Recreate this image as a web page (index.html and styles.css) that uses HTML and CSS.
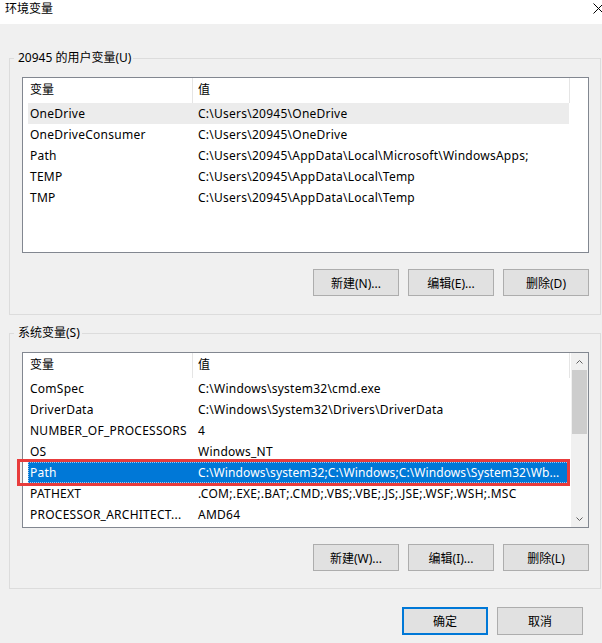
FILE: index.html
```html
<!DOCTYPE html>
<html lang="zh-CN">
<head>
    <meta charset="UTF-8">
    <title>环境变量</title>
    <link rel="stylesheet" href="styles.css">
</head>
<body>
    <div class="window">
        <div class="titlebar">
            <span class="title">环境变量</span>
            <svg class="close-icon" width="11" height="11" viewBox="0 0 11 11">
                <path d="M0.5 0.5 L10.5 10.5 M10.5 0.5 L0.5 10.5" stroke="#000" stroke-width="1" fill="none"/>
            </svg>
        </div>

        <div class="dialog-body">
            <fieldset class="group group-user">
                <legend>20945 的用户变量(U)</legend>
                <div class="listview">
                    <div class="lv-main">
                        <div class="lv-header">
                            <div class="hd-name">变量</div>
                            <div class="hd-value">值</div>
                        </div>
                        <div class="lv-row hover"><div class="cell-name">OneDrive</div><div class="cell-value">C:\Users\20945\OneDrive</div></div>
                        <div class="lv-row"><div class="cell-name">OneDriveConsumer</div><div class="cell-value">C:\Users\20945\OneDrive</div></div>
                        <div class="lv-row"><div class="cell-name">Path</div><div class="cell-value">C:\Users\20945\AppData\Local\Microsoft\WindowsApps;</div></div>
                        <div class="lv-row"><div class="cell-name">TEMP</div><div class="cell-value">C:\Users\20945\AppData\Local\Temp</div></div>
                        <div class="lv-row"><div class="cell-name">TMP</div><div class="cell-value">C:\Users\20945\AppData\Local\Temp</div></div>
                    </div>
                </div>
                <div class="btn-row">
                    <button class="btn">新建(N)...</button>
                    <button class="btn">编辑(E)...</button>
                    <button class="btn">删除(D)</button>
                </div>
            </fieldset>

            <fieldset class="group group-system">
                <legend>系统变量(S)</legend>
                <div class="listview">
                    <div class="lv-main">
                        <div class="lv-header">
                            <div class="hd-name">变量</div>
                            <div class="hd-value">值</div>
                        </div>
                        <div class="lv-row"><div class="cell-name">ComSpec</div><div class="cell-value">C:\Windows\system32\cmd.exe</div></div>
                        <div class="lv-row"><div class="cell-name">DriverData</div><div class="cell-value">C:\Windows\System32\Drivers\DriverData</div></div>
                        <div class="lv-row"><div class="cell-name">NUMBER_OF_PROCESSORS</div><div class="cell-value">4</div></div>
                        <div class="lv-row"><div class="cell-name">OS</div><div class="cell-value">Windows_NT</div></div>
                        <div class="lv-row selected"><div class="cell-name">Path</div><div class="cell-value">C:\Windows\system32;C:\Windows;C:\Windows\System32\Wb...</div></div>
                        <div class="lv-row"><div class="cell-name">PATHEXT</div><div class="cell-value">.COM;.EXE;.BAT;.CMD;.VBS;.VBE;.JS;.JSE;.WSF;.WSH;.MSC</div></div>
                        <div class="lv-row"><div class="cell-name">PROCESSOR_ARCHITECT...</div><div class="cell-value">AMD64</div></div>
                    </div>
                    <div class="scrollbar">
                        <div class="sb-arrow">
                            <svg width="7" height="4" viewBox="0 0 7 4"><path d="M0.5 3.5 L3.5 0.5 L6.5 3.5" stroke="#606060" fill="none"/></svg>
                        </div>
                        <div class="sb-track">
                            <div class="sb-thumb"></div>
                        </div>
                        <div class="sb-arrow">
                            <svg width="7" height="4" viewBox="0 0 7 4"><path d="M0.5 0.5 L3.5 3.5 L6.5 0.5" stroke="#606060" fill="none"/></svg>
                        </div>
                    </div>
                </div>
                <div class="btn-row">
                    <button class="btn">新建(W)...</button>
                    <button class="btn">编辑(I)...</button>
                    <button class="btn">删除(L)</button>
                </div>
            </fieldset>

            <div class="dialog-actions">
                <button class="btn btn-default">确定</button>
                <button class="btn">取消</button>
            </div>
        </div>

        <!-- annotation drawn over the selected Path row -->
        <div class="highlight-box"></div>
    </div>
</body>
</html>
```

FILE: styles.css
```css
body {
    margin: 0;
    background-color: #f0f0f0;
    font-family: "Noto Sans", "Noto Sans CJK SC", sans-serif;
    font-size: 12px;
    color: #000;
}
.window {
    position: relative;
    width: 602px;
    height: 643px;
    overflow: hidden;
    background-color: #f0f0f0;
}
.titlebar {
    height: 24px;
    background: #fff;
    display: flex;
    justify-content: space-between;
    align-items: flex-start;
}
.titlebar .title {
    padding-left: 5px;
    padding-top: 1px;
    line-height: 16px;
}
.close-icon {
    margin-top: 3px;
    margin-right: -2px;
}
.dialog-body {
    padding: 26px 1px 0 9px;
}
.group {
    margin: 0;
    min-width: 0;
    border: 1px solid #dcdcdc;
    padding: 11px 11px 17px 12px;
}
.group-user {
    padding-bottom: 18px;
}
.group-system {
    margin-top: 10px;
}
.group legend {
    margin-left: -8px;
    padding: 0 2px 0 4px;
    line-height: 16px;
}
.listview {
    height: 176px;
    box-sizing: border-box;
    border: 1px solid #828790;
    background: #fff;
    display: flex;
    overflow: hidden;
}
.lv-main {
    flex: 1;
    min-width: 0;
    overflow: hidden;
}
.lv-header {
    display: flex;
    height: 25px;
    line-height: 24px;
}
.hd-name {
    width: 169px;
    padding-left: 7px;
    box-sizing: border-box;
}
.hd-value {
    width: 378px;
    padding-left: 5px;
    box-sizing: border-box;
    border-left: 1px solid #e5e5e5;
    border-right: 1px solid #e5e5e5;
}
.lv-row {
    display: flex;
    margin-left: 5px;
    width: 541px;
    height: 21px;
    line-height: 21px;
    white-space: nowrap;
    letter-spacing: 0.25px;
}
.lv-row.hover {
    background-color: #ececec;
}
.lv-row.selected {
    background-color: #0078d7;
    color: #fff;
    outline: 1px dotted #9cc8f0;
    outline-offset: -1px;
}
.lv-row.selected .cell-value {
    letter-spacing: 0.1px;
}
.cell-name {
    width: 164px;
    padding-left: 2px;
    box-sizing: border-box;
    overflow: hidden;
}
.cell-value {
    flex: 1;
    min-width: 0;
    padding-left: 6px;
    overflow: hidden;
}
.scrollbar {
    width: 17px;
    background: #f0f0f0;
    display: flex;
    flex-direction: column;
}
.sb-arrow {
    height: 17px;
    display: flex;
    align-items: center;
    justify-content: center;
}
.sb-track {
    flex: 1;
}
.sb-thumb {
    height: 64px;
    margin: 0 1px;
    background: #cdcdcd;
}
.btn-row {
    display: flex;
    justify-content: flex-end;
    gap: 9px;
    margin-top: 16px;
}
.btn {
    width: 86px;
    height: 27px;
    box-sizing: border-box;
    background: #e1e1e1;
    border: 1px solid #adadad;
    font-family: inherit;
    font-size: 12px;
    color: #000;
    padding: 0;
}
.dialog-actions {
    display: flex;
    justify-content: flex-end;
    gap: 9px;
    margin-top: 18px;
    padding-right: 18px;
}
.dialog-actions .btn {
    height: 28px;
}
.btn-default {
    border: 2px solid #0078d7;
}
.highlight-box {
    position: absolute;
    left: 17px;
    top: 459px;
    width: 553px;
    height: 27px;
    box-sizing: border-box;
    border: 3px solid #e83c3c;
}
```
